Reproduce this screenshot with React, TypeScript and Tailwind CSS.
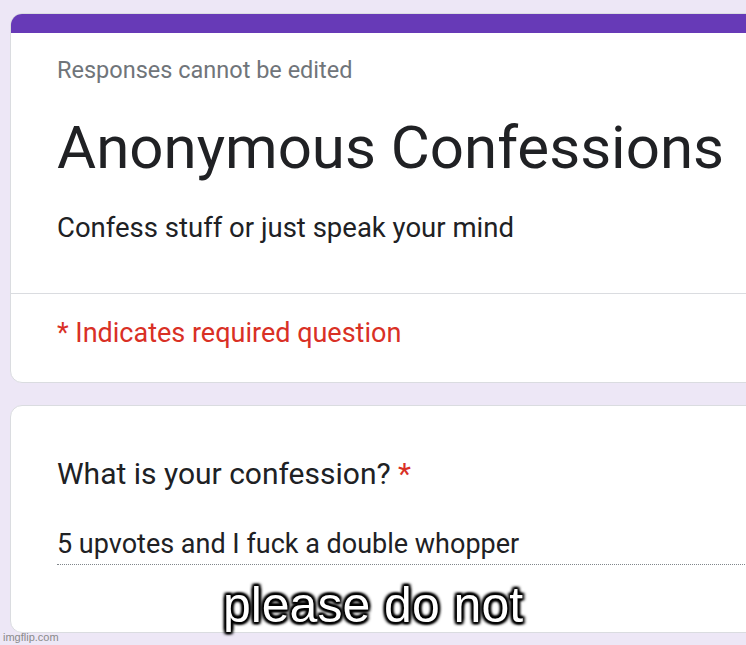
import React from 'react';

const roboto = { fontFamily: 'Roboto, "Liberation Sans", sans-serif' };

export default function App() {
  return (
    <div className="relative w-[746px] h-[645px] overflow-hidden bg-[#ede7f6] pt-[13px] pl-[10px]" style={roboto}>
      {/* Header card */}
      <div className="w-[800px] rounded-[12px] bg-white border border-[#dadce0] overflow-hidden">
        <div className="h-[19px] bg-[#673ab7]" />
        <div className="px-[46px] pt-[23px] pb-[47px]">
          <p className="text-[23.5px] leading-[28px] text-[#70757a]">Responses cannot be edited</p>
          <h1 className="mt-[28px] text-[60px] leading-[72px] text-[#202124]">Anonymous Confessions</h1>
          <p className="mt-[26px] text-[27.5px] leading-[36px] text-[#202124]">Confess stuff or just speak your mind</p>
        </div>
        <div className="border-t border-[#dadce0] px-[46px] pt-[21px] pb-[31px]">
          <p className="text-[27px] leading-[36px] text-[#d93025]">* Indicates required question</p>
        </div>
      </div>

      {/* Question card */}
      <div className="mt-[22px] w-[800px] h-[228px] rounded-[12px] bg-white border border-[#dadce0] pl-[46px] pt-[48px]">
        <p className="text-[30px] leading-[40px] text-[#202124]">
          What is your confession? <span className="text-[#d93025]">*</span>
        </p>
        <div className="mt-[33px] border-b border-dotted border-[#80868b] pb-[3px]">
          <p className="text-[27px] leading-[34px] text-[#202124]">5 upvotes and I fuck a double whopper</p>
        </div>
      </div>

      {/* Meme caption */}
      <div
        className="absolute left-0 right-0 top-[577px] text-center text-[50px] leading-[56px] text-white [text-shadow:0_0_4px_#000,0_0_3px_#000,2px_2px_3px_#000,-2px_-2px_3px_#000,2px_-2px_3px_#000,-2px_2px_3px_#000,0_2px_2px_#000,0_-2px_2px_#000]"
        style={{ fontFamily: '"Liberation Sans", Arial, sans-serif' }}
      >
        please do not
      </div>
      <div
        className="absolute left-[3px] bottom-[2px] text-[11px] leading-[12px] text-[#8a8a8a]"
        style={{ fontFamily: '"Liberation Sans", Arial, sans-serif' }}
      >
        imgflip.com
      </div>
    </div>
  );
}
